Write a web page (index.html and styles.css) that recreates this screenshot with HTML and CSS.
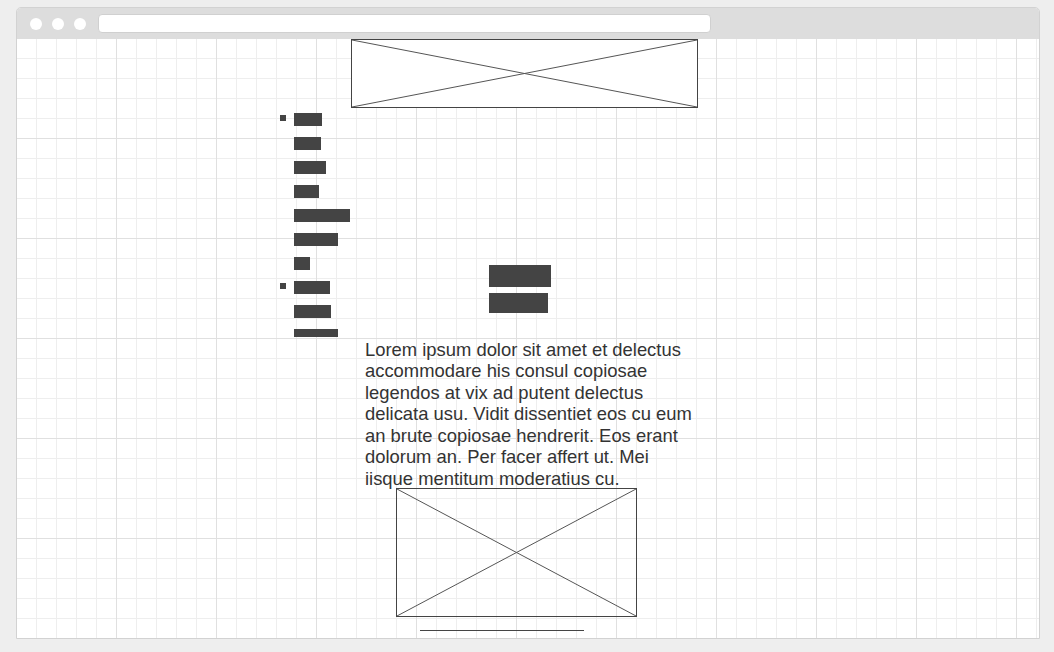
FILE: index.html
```html
<!DOCTYPE html>
<html>
<head>
<meta charset="utf-8">
<link rel="stylesheet" href="styles.css">
</head>
<body>
<div class="window">
  <div class="titlebar">
    <span class="dot"></span><span class="dot"></span><span class="dot"></span>
    <div class="url"></div>
  </div>
  <div class="canvas">
    <div class="ph ph-top">
      <svg viewBox="0 0 100 100" preserveAspectRatio="none"><line x1="0" y1="0" x2="100" y2="100"/><line x1="100" y1="0" x2="0" y2="100"/></svg>
    </div>
    <div class="middle">
      <ul class="list">
        <li class="item"><span class="mark on"></span><span class="bar" style="width:28px"></span></li>
        <li class="item"><span class="mark"></span><span class="bar" style="width:27px"></span></li>
        <li class="item"><span class="mark"></span><span class="bar" style="width:32px"></span></li>
        <li class="item"><span class="mark"></span><span class="bar" style="width:25px"></span></li>
        <li class="item"><span class="mark"></span><span class="bar" style="width:56px"></span></li>
        <li class="item"><span class="mark"></span><span class="bar" style="width:44px"></span></li>
        <li class="item"><span class="mark"></span><span class="bar" style="width:16px"></span></li>
        <li class="item"><span class="mark on"></span><span class="bar" style="width:36px"></span></li>
        <li class="item"><span class="mark"></span><span class="bar" style="width:37px"></span></li>
        <li class="item last"><span class="mark"></span><span class="bar" style="width:44px"></span></li>
      </ul>
      <div class="blocks">
        <div class="block b1"></div>
        <div class="block b2"></div>
      </div>
    </div>
    <p class="text">Lorem ipsum dolor sit amet et delectus accommodare his consul copiosae legendos at vix ad putent delectus delicata usu. Vidit dissentiet eos cu eum an brute copiosae hendrerit. Eos erant dolorum an. Per facer affert ut. Mei iisque mentitum moderatius cu.</p>
    <div class="ph ph-bottom">
      <svg viewBox="0 0 100 100" preserveAspectRatio="none"><line x1="0" y1="0" x2="100" y2="100"/><line x1="100" y1="0" x2="0" y2="100"/></svg>
    </div>
    <div class="rule"></div>
  </div>
</div>
</body>
</html>
```
FILE: styles.css
```css
html, body {
  margin: 0;
  padding: 0;
  background: #eeeeee;
}
.window {
  box-sizing: border-box;
  width: 1024px;
  height: 632px;
  margin: 7px 0 0 16px;
  border: 1px solid #d2d2d2;
  border-radius: 5px 5px 0 0;
  overflow: hidden;
  background: #ffffff;
}
.titlebar {
  height: 31px;
  background: #dddddd;
  display: flex;
  align-items: center;
  padding-left: 13px;
  box-sizing: border-box;
}
.dot {
  width: 12px;
  height: 12px;
  border-radius: 50%;
  background: #ffffff;
  margin-right: 10px;
  flex: none;
}
.dot:nth-child(3) {
  margin-right: 12px;
}
.url {
  width: 613px;
  height: 19px;
  background: #ffffff;
  border: 1px solid #d0d0d0;
  border-radius: 4px;
  box-sizing: border-box;
}
.canvas {
  height: 599px;
  overflow: hidden;
  background-color: #ffffff;
  background-image:
    linear-gradient(to right, #e0e0e0 1px, transparent 1px),
    linear-gradient(to bottom, #e0e0e0 1px, transparent 1px),
    linear-gradient(to right, #eeeeee 1px, transparent 1px),
    linear-gradient(to bottom, #eeeeee 1px, transparent 1px);
  background-size: 100px 100px, 100px 100px, 20px 20px, 20px 20px;
  background-position: -1px -1px;
  font-family: "Liberation Sans", Arial, sans-serif;
}
.ph {
  box-sizing: border-box;
  border: 1px solid #444444;
  background: #ffffff;
}
.ph svg {
  display: block;
  width: 100%;
  height: 100%;
}
.ph line {
  stroke: #555555;
  stroke-width: 1;
  vector-effect: non-scaling-stroke;
}
.ph-top {
  margin-left: 334px;
  width: 347px;
  height: 69px;
}
.middle {
  display: flex;
  align-items: flex-start;
}
.list {
  list-style: none;
  margin: 0 0 0 263px;
  padding: 0;
  width: 70px;
}
.item {
  display: flex;
  gap: 8px;
  height: 24px;
}
.item.last {
  height: 13px;
}
.mark {
  width: 6px;
  height: 6px;
  margin-top: 7px;
  flex: none;
}
.mark.on {
  background: #444444;
}
.bar {
  height: 13px;
  margin-top: 5px;
  background: #444444;
}
.item.last .bar {
  height: 8px;
}
.blocks {
  margin-left: 139px;
  margin-top: 157px;
  display: flex;
  flex-direction: column;
  gap: 6px;
}
.block {
  background: #444444;
}
.b1 {
  width: 62px;
  height: 22px;
}
.b2 {
  width: 59px;
  height: 20px;
}
.text {
  margin: 1.5px 0 0 348px;
  width: 334px;
  font-size: 18.4px;
  line-height: 21.6px;
  color: #333333;
}
.ph-bottom {
  margin-top: -2px;
  margin-left: 379px;
  width: 241px;
  height: 129px;
  background: transparent;
}
.rule {
  margin: 13px 0 0 403px;
  width: 164px;
  height: 1px;
  background: #444444;
}
```
